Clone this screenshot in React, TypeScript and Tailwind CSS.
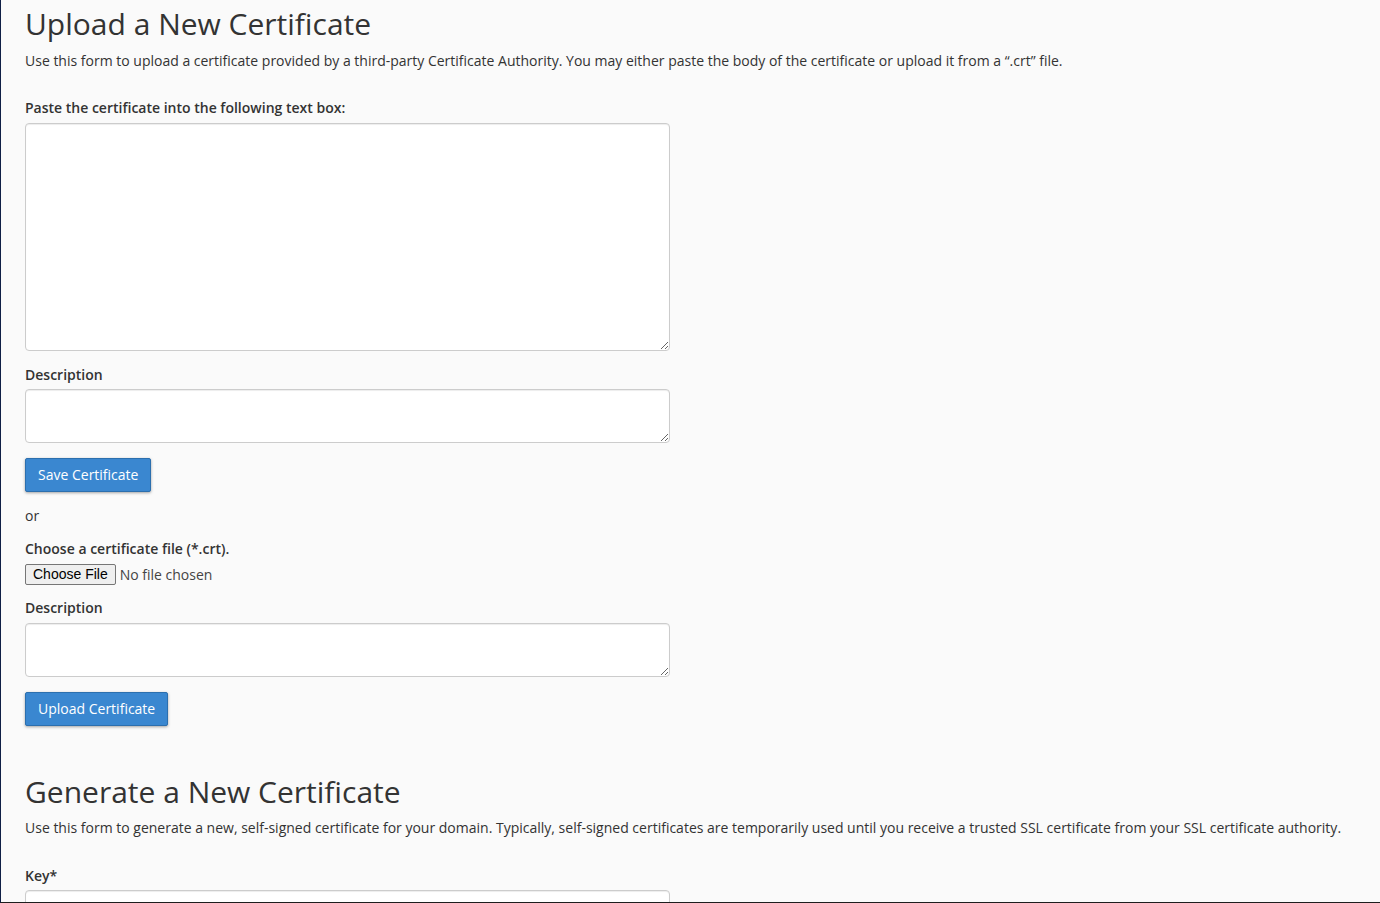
const font = { fontFamily: '"Open Sans", "Noto Sans", sans-serif' };

function Label({ children, className = "" }: { children: React.ReactNode; className?: string }) {
  return (
    <label className={`block text-[14px] leading-[20px] font-semibold text-[#333] ${className}`}>
      {children}
    </label>
  );
}

function Area({ h, className = "" }: { h: string; className?: string }) {
  return (
    <textarea
      className={`block w-[645px] ${h} rounded-[4px] border border-[#cccccc] bg-white px-3 py-1.5 text-[14px] outline-none shadow-[inset_0_1px_1px_rgba(0,0,0,0.075)] ${className}`}
    />
  );
}

function PrimaryButton({ children, className = "" }: { children: React.ReactNode; className?: string }) {
  return (
    <button
      className={`block h-[34px] rounded-[2px] border border-[#2c6fae] bg-[#3a87d0] px-3 text-[14px] leading-[20px] text-white shadow-[0_1px_3px_rgba(0,0,0,0.35)] ${className}`}
    >
      {children}
    </button>
  );
}

export default function App() {
  return (
    <div
      className="h-[903px] overflow-hidden border-l border-b border-l-[#0f1f45] border-b-[#1e1e1e] bg-[#fafafa] text-[#333]"
      style={font}
    >
      <div className="pl-[24px]">
        {/* upload section */}
        <h1 className="pt-[7px] text-[30px] leading-[33px] font-normal text-[#333]">
          Upload a New Certificate
        </h1>
        <p className="mt-[11px] text-[14px] leading-[20px]">
          Use this form to upload a certificate provided by a third-party Certificate Authority. You may either paste the body of the certificate or upload it from a “.crt” file.
        </p>

        <Label className="mt-[27px]">Paste the certificate into the following text box:</Label>
        <Area h="h-[228px]" className="mt-[5px]" />

        <Label className="mt-[14px]">Description</Label>
        <Area h="h-[54px]" className="mt-[4px]" />
        <PrimaryButton className="mt-[15px]">Save Certificate</PrimaryButton>

        <p className="mt-[14px] text-[14px] leading-[20px]">or</p>

        <Label className="mt-[13px]">Choose a certificate file (*.crt).</Label>
        <div className="mt-[5px] flex h-[21px] items-center">
          <span
            className="flex h-[21px] items-center rounded-[2px] border border-[#767676] bg-[#efefef] px-[7px] text-[14px] text-black"
            style={{ fontFamily: '"Liberation Sans", Arial, sans-serif' }}
          >
            Choose File
          </span>
          <span className="ml-[4px] text-[14px] text-[#444]">No file chosen</span>
        </div>

        <Label className="mt-[13px]">Description</Label>
        <Area h="h-[54px]" className="mt-[5px]" />
        <PrimaryButton className="mt-[15px]">Upload Certificate</PrimaryButton>

        {/* generate section */}
        <h1 className="mt-[49px] text-[30px] leading-[33px] font-normal text-[#333]">
          Generate a New Certificate
        </h1>
        <p className="mt-[10px] text-[14px] leading-[20px]">
          Use this form to generate a new, self-signed certificate for your domain. Typically, self-signed certificates are temporarily used until you receive a trusted SSL certificate from your SSL certificate authority.
        </p>

        <Label className="mt-[28px]">Key*</Label>
        <Area h="h-[54px]" className="mt-[4px]" />
      </div>
    </div>
  );
}
